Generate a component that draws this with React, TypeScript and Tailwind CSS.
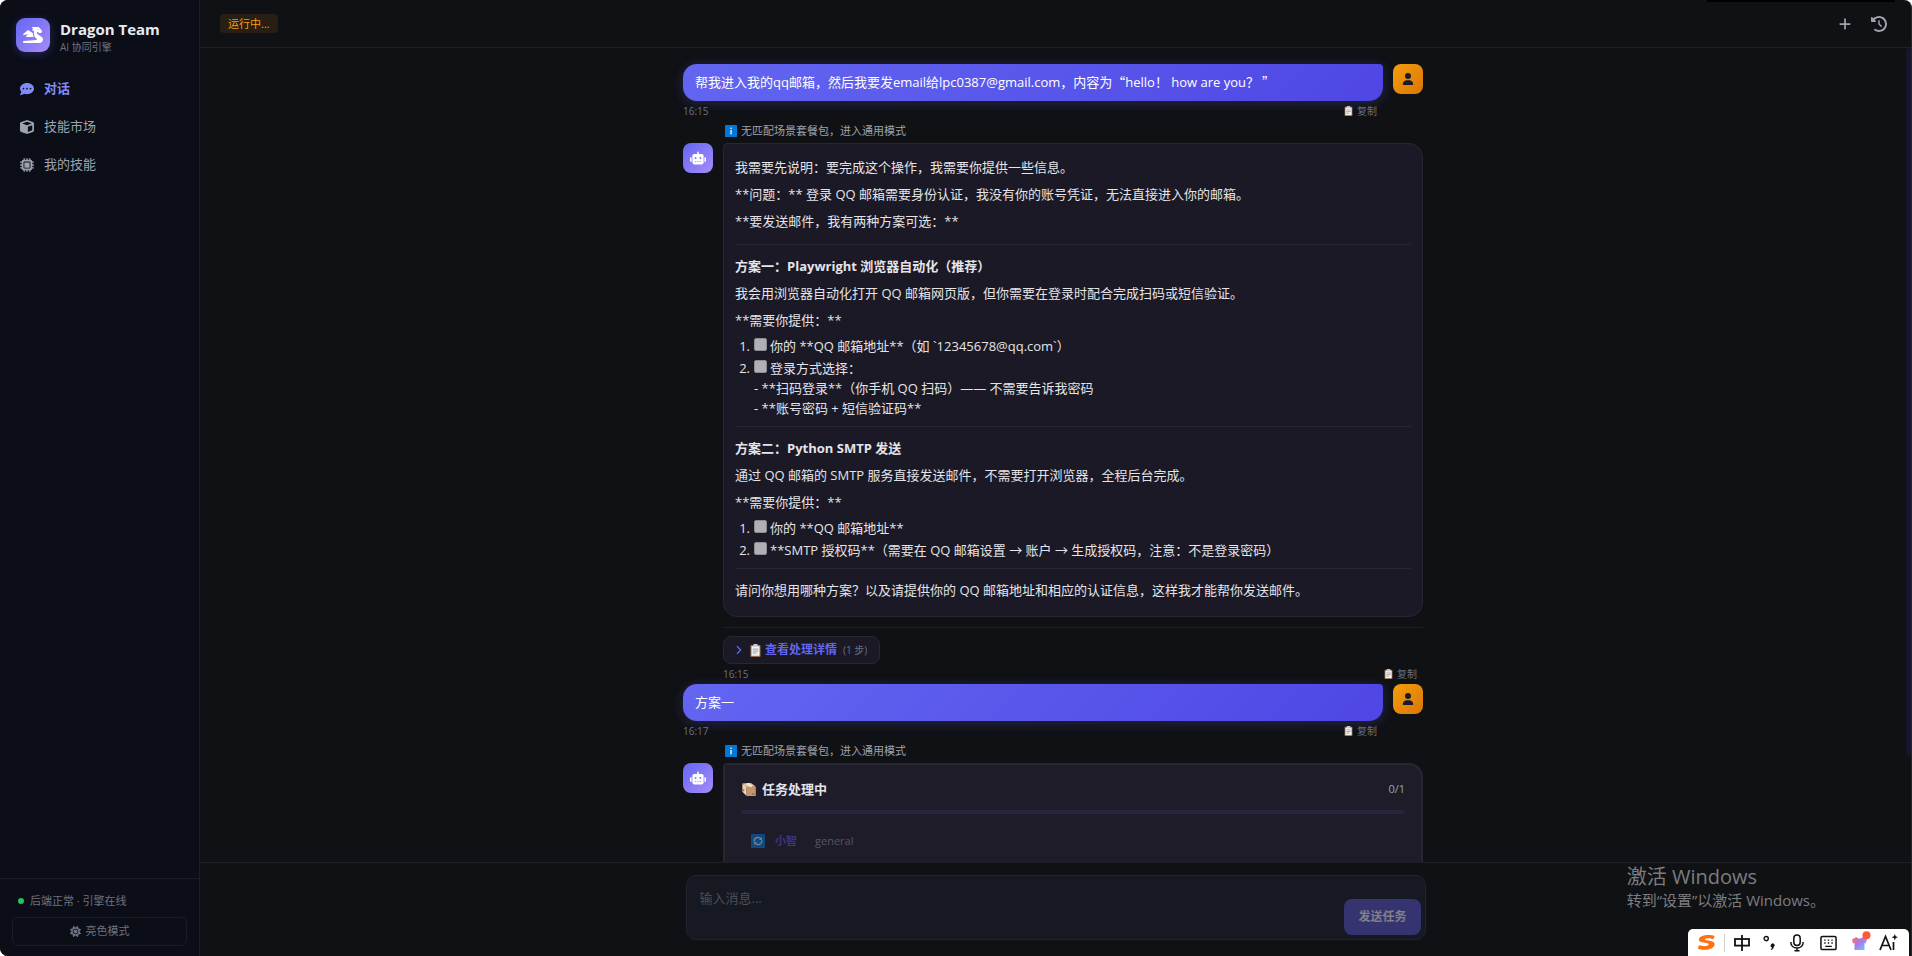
import type { ReactNode } from "react";
import {
  FaCommentDots,
  FaCube,
  FaDragon,
  FaMicrochip,
  FaPlus,
  FaRobot,
  FaSun,
  FaUser,
  FaClockRotateLeft,
} from "react-icons/fa6";
import { FiChevronRight } from "react-icons/fi";

function ClipboardIcon({ className }: { className: string }) {
  return (
    <svg viewBox="0 0 12 14" className={className} aria-hidden="true">
      <rect x="0.5" y="1" width="11" height="13" rx="1" fill="#9a6b4a" />
      <rect x="1.6" y="2.2" width="8.8" height="10.6" fill="#f1f1f1" />
      <rect x="3.6" y="0" width="4.8" height="3" rx="0.8" fill="#c9c9cc" />
      <path d="M3 5.5h6M3 7.7h6M3 9.9h4" stroke="#8d8d92" strokeWidth="0.9" />
    </svg>
  );
}

function InfoIcon() {
  return (
    <svg viewBox="0 0 12 12" className="size-3 shrink-0" aria-hidden="true">
      <rect width="12" height="12" rx="0.6" fill="#0078d7" />
      <rect x="5.4" y="2.6" width="1.3" height="1.4" fill="#fff" />
      <rect x="5.4" y="5" width="1.3" height="4.4" fill="#fff" />
    </svg>
  );
}

function PackageIcon() {
  return (
    <svg viewBox="0 0 16 15" className="h-[15px] w-4 shrink-0" aria-hidden="true">
      <path d="M1.4 1.4 9.8 1 14.8 4.6 5.6 5z" fill="#e8c8a6" />
      <path d="M1.4 1.4 5.6 5V14L1.4 9.8z" fill="#f0d3b3" />
      <path d="M5.6 5 14.8 4.6V14H5.6z" fill="#c3976a" />
      <path d="M5.2 1.2 7.4 1.1l4.2 3.7-2.4.1z" fill="#f7ebdc" />
      <rect x="2" y="7.4" width="1.2" height="1.8" fill="#d13438" />
      <path d="M11 12h2.4" stroke="#7a5a3c" strokeWidth="1" />
    </svg>
  );
}

function SyncIcon() {
  return (
    <svg viewBox="0 0 14 14" className="size-3.5 shrink-0" aria-hidden="true">
      <rect width="14" height="14" rx="0.8" fill="#0078d7" />
      <path d="M3.2 7.6A3.8 3.8 0 0 1 10 4.9M10.8 6.4A3.8 3.8 0 0 1 4 9.1" fill="none" stroke="#cfe6fa" strokeWidth="1.3" />
      <path d="M10.8 3v3H7.9zM3.2 11V8h2.9z" fill="#cfe6fa" />
    </svg>
  );
}

function Meta({ time }: { time: string }) {
  return (
    <div className="flex h-5 items-center justify-between text-[#6b7280]">
      <time className="text-[10px] leading-5">{time}</time>
      <button type="button" className="flex items-center gap-1 px-1.5 text-[10px] leading-5">
        <ClipboardIcon className="h-[10px] w-[9px]" />
        复制
      </button>
    </div>
  );
}

function UserMessage({ children, time }: { children: ReactNode; time: string }) {
  return (
    <div className="flex items-start gap-2.5">
      <div className="min-w-0 flex-1">
        <p className="rounded-[14px] rounded-tr-[4px] bg-linear-135 from-[#6366f1] to-[#4f46e5] px-3 py-2 text-[13px] leading-[21px] text-white shadow-[0_2px_12px_rgba(99,102,241,0.25)]">
          {children}
        </p>
        <Meta time={time} />
      </div>
      <div className="flex size-[30px] items-center justify-center rounded-lg bg-linear-to-br from-[#f59e0b] to-[#d97706] text-[#1a1a28]">
        <FaUser className="size-3" />
      </div>
    </div>
  );
}

function Notice() {
  return (
    <p className="mb-0.5 ml-[42px] flex items-center gap-1 text-[11px] leading-5 text-[#9ca3af]">
      <InfoIcon />
      无匹配场景套餐包，进入通用模式
    </p>
  );
}

function BotRow({ children }: { children: ReactNode }) {
  return (
    <div className="flex items-start gap-2.5">
      <div className="flex size-[30px] shrink-0 items-center justify-center rounded-lg bg-linear-to-br from-[#6366f1] to-[#a78bfa] text-white">
        <FaRobot className="size-4" />
      </div>
      <div className="min-w-0 flex-1">{children}</div>
    </div>
  );
}

function Rule() {
  return <hr className="mt-2 mb-[11px] border-[#272732]" />;
}

function CheckItem({ n, label, children }: { n: number; label: string; children?: ReactNode }) {
  return (
    <li className="flex">
      <span className="w-[19px] shrink-0 pr-1 text-right">{n}.</span>
      <div>
        <label className="flex items-center gap-[3px]">
          <input
            type="checkbox"
            disabled
            className="-mt-[3px] size-[13px] appearance-none rounded-[2px] border border-[#8d8c92] bg-[#b0afb4]"
          />
          {label}
        </label>
        {children}
      </div>
    </li>
  );
}

function Answer() {
  return (
    <div className="rounded-[14px] rounded-tl-[4px] border border-[#272730] bg-[#1a1925] px-[11px] pt-[13px] pb-4 text-[13px] leading-5 text-[#e4e4e9]">
      <div className="space-y-[7px] pb-[5px]">
        <p>我需要先说明：要完成这个操作，我需要你提供一些信息。</p>
        <p>**问题：** 登录 QQ 邮箱需要身份认证，我没有你的账号凭证，无法直接进入你的邮箱。</p>
        <p>**要发送邮件，我有两种方案可选：**</p>
      </div>
      <Rule />
      <div className="space-y-[7px]">
        <h3 className="font-bold">方案一：Playwright 浏览器自动化（推荐）</h3>
        <p>我会用浏览器自动化打开 QQ 邮箱网页版，但你需要在登录时配合完成扫码或短信验证。</p>
        <p>**需要你提供：**</p>
      </div>
      <ol className="mt-1.5 space-y-0.5">
        <CheckItem n={1} label="你的 **QQ 邮箱地址**（如 `12345678@qq.com`）" />
        <CheckItem n={2} label="登录方式选择：">
          <p>- **扫码登录**（你手机 QQ 扫码）—— 不需要告诉我密码</p>
          <p>- **账号密码 + 短信验证码**</p>
        </CheckItem>
      </ol>
      <Rule />
      <div className="space-y-[7px]">
        <h3 className="font-bold">方案二：Python SMTP 发送</h3>
        <p>通过 QQ 邮箱的 SMTP 服务直接发送邮件，不需要打开浏览器，全程后台完成。</p>
        <p>**需要你提供：**</p>
      </div>
      <ol className="mt-1.5 space-y-0.5">
        <CheckItem n={1} label="你的 **QQ 邮箱地址**" />
        <CheckItem n={2} label="**SMTP 授权码**（需要在 QQ 邮箱设置 → 账户 → 生成授权码，注意：不是登录密码）" />
      </ol>
      <Rule />
      <p>请问你想用哪种方案？以及请提供你的 QQ 邮箱地址和相应的认证信息，这样我才能帮你发送邮件。</p>
    </div>
  );
}

function TaskCard() {
  return (
    <div className="h-[170px] rounded-[14px] rounded-tl-[4px] border-2 border-[#272732] bg-[#1e1c29] p-4">
      <div className="flex items-center gap-[5px] text-[#e4e4e9]">
        <PackageIcon />
        <h3 className="text-[13px] leading-4 font-bold">任务处理中</h3>
        <span className="ml-auto text-[11px] leading-4 text-[#9ca3af]">0/1</span>
      </div>
      <div role="progressbar" aria-valuenow={0} aria-valuemax={1} className="mt-[13px] h-1 rounded-sm bg-[#28243f]" />
      <div className="mt-4 flex h-[22px] items-center px-2.5 text-[11px] opacity-50">
        <SyncIcon />
        <span className="ml-2.5 font-bold text-[#5b50d6]">小智</span>
        <span className="ml-[18px] text-[#8b8b98]">general</span>
      </div>
    </div>
  );
}

const navItems = [
  { label: "对话", icon: FaCommentDots, active: true },
  { label: "技能市场", icon: FaCube, active: false },
  { label: "我的技能", icon: FaMicrochip, active: false },
];

function Sidebar() {
  return (
    <aside className="flex w-[200px] shrink-0 flex-col border-r border-[#1e1f26] bg-[#0b0d17]">
      <div className="flex items-start gap-2.5 px-4 pt-[18px]">
        <div className="flex size-[34px] items-center justify-center rounded-[9px] bg-linear-to-br from-[#6366f1] to-[#a78bfa] text-white shadow-[0_2px_10px_rgba(99,102,241,0.3)]">
          <FaDragon className="h-[18px] w-5" />
        </div>
        <div className="pt-0.5">
          <h1 className="text-[15px] leading-[18px] font-bold text-[#e8eaf0]">Dragon Team</h1>
          <p className="text-[10px] leading-[18px] text-[#6b7280]">AI 协同引擎</p>
        </div>
      </div>
      <nav className="mt-3.5 flex flex-col">
        {navItems.map(({ label, icon: Icon, active }) => (
          <a
            key={label}
            href="#"
            className={
              active
                ? "flex h-[38px] items-center gap-2.5 px-5 text-[13px] font-bold text-[#818cf8]"
                : "flex h-[38px] items-center gap-2.5 px-5 text-[13px] text-[#9ca3af]"
            }
          >
            <Icon className="size-3.5" />
            {label}
          </a>
        ))}
      </nav>
      <div className="mt-auto border-t border-[#1a1c26] px-3 pt-3 pb-2.5">
        <p className="flex items-center gap-1.5 px-1.5 text-[11px] leading-5 text-[#6b7280]">
          <span className="size-1.5 rounded-full bg-[#22c55e]" />
          后端正常 · 引擎在线
        </p>
        <button
          type="button"
          className="mt-1.5 flex h-[29px] w-full items-center justify-center gap-[5px] rounded-md border border-[#1a1c26] text-[11px] text-[#6b7280]"
        >
          <FaSun className="size-[11px]" />
          亮色模式
        </button>
      </div>
    </aside>
  );
}

function Composer() {
  return (
    <footer className="border-t border-[#1f2025] px-4 pt-3 pb-4">
      <form className="mx-auto flex max-w-[740px] items-end rounded-[10px] border border-[#21242e] bg-[#161921] pr-1">
        <textarea
          aria-label="输入消息"
          placeholder="输入消息..."
          className="h-[63px] flex-1 resize-none bg-transparent px-[13px] py-3 text-[13px] leading-5 text-[#e4e4e9] outline-none placeholder:text-[#4b4f5b]"
        />
        <button
          type="button"
          className="mb-1 h-9 rounded-lg bg-[#353471] px-3.5 text-[12px] font-bold text-[#808088]"
        >
          发送任务
        </button>
      </form>
    </footer>
  );
}

function InputMethodBar() {
  return (
    <div className="absolute right-0.5 bottom-0 flex h-[27px] w-[221px] items-center rounded-t-[5px] bg-white pr-2 pl-[9px] text-[#111]">
      <svg viewBox="0 0 20 18" className="h-[17px] w-[19px]" aria-hidden="true">
        <path
          d="M18.6 2.2C14 .2 3.200.8 2 5.400 1.200 8.600 6 9 9.600 9.600c2.400.4 3.200 1 2.400 2-1.400 1.600-6.400 1.600-10.200.4L1 15.600c5.200 2 15.600 1.600 17.400-3.800 1-3.400-3.200-4.200-6.800-4.800-2.600-.4-4-.8-3.200-1.600 1.200-1.200 5.600-1 8.800.2z"
          fill="#ff7112"
        />
      </svg>
      <span className="mx-2 h-[18px] w-px bg-[#cfcfcf]" />
      <svg viewBox="0 0 18 18" className="size-[18px]" fill="none" stroke="currentColor" strokeWidth="1.8" aria-hidden="true">
        <rect x="2" y="5" width="14" height="6.6" />
        <path d="M9 1v16" />
      </svg>
      <svg viewBox="0 0 12 16" className="ml-3 h-4 w-3" aria-hidden="true">
        <circle cx="3.2" cy="3.6" r="2.1" fill="none" stroke="currentColor" strokeWidth="1.4" />
        <path d="M8 9.6a1.9 1.9 0 1 1 2.9 2.2c-.3 1.5-1.2 2.6-2.8 3.2l-.4-.7c.8-.5 1.3-1.1 1.4-1.9A1.9 1.9 0 0 1 8 9.6z" fill="currentColor" />
      </svg>
      <svg viewBox="0 0 16 18" className="ml-3.5 h-[18px] w-4" fill="none" stroke="currentColor" strokeWidth="1.5" aria-hidden="true">
        <rect x="4.8" y="1" width="6.4" height="10.5" rx="3.2" />
        <path d="M1.8 8c0 3.8 2.8 6 6.2 6s6.2-2.2 6.2-6M8 14v2.8M5.5 16.8h5" />
      </svg>
      <svg viewBox="0 0 18 16" className="ml-[15px] h-4 w-[17px]" fill="none" stroke="currentColor" aria-hidden="true">
        <rect x="1" y="1" width="16" height="14" rx="1.5" strokeWidth="1.6" />
        <path d="M4.5 5H6M8.2 5h1.5M12 5h1.5M4.5 8H6M8.2 8h1.5M12 8h1.5M5.5 11.5h7" strokeWidth="1.4" />
      </svg>
      <svg viewBox="0 0 20 20" className="mb-1 ml-3.5 size-5" aria-hidden="true">
        <defs>
          <linearGradient id="shirt" x1="0" y1="0" x2="1" y2="1">
            <stop offset="0" stopColor="#ff6a5c" />
            <stop offset="0.5" stopColor="#a77bf0" />
            <stop offset="1" stopColor="#5fd8ff" />
          </linearGradient>
        </defs>
        <path d="M1 8.5 5.5 6c1 2 5 2 6 0L16 8.5 14.5 12.5 13.5 12V19h-10V12L2 12.5z" fill="url(#shirt)" />
        <circle cx="15.5" cy="4.2" r="4" fill="#ff5a36" />
      </svg>
      <svg viewBox="0 0 19 17" className="ml-2 h-[17px] w-[19px]" fill="none" stroke="currentColor" strokeWidth="1.7" aria-hidden="true">
        <path d="M1 16 6.5 2.500 12 16M3 11.500h7M14.500 8v8" />
        <path d="M15.800 0l.9 2.300 2.300.9-2.300.9-.9 2.300-.9-2.300-2.300-.9 2.300-.9z" fill="currentColor" stroke="none" />
      </svg>
    </div>
  );
}

export default function App() {
  return (
    <div className="h-screen bg-white font-['Open_Sans','Noto_Sans_CJK_SC',sans-serif]">
      <div className="relative flex h-full overflow-hidden rounded-lg rounded-br-none border-r border-[#26272b] bg-[#101115]">
        <Sidebar />
        <main className="flex min-w-0 flex-1 flex-col">
          <header className="flex h-12 shrink-0 items-center border-b border-[#1f2025] px-5">
            <span className="rounded bg-[#f59e0b]/10 px-2 text-[11px] leading-[19px] text-[#f59e0b]">运行中...</span>
            <div className="ml-auto flex items-center gap-[19px] pr-1 text-[#9ca3af]">
              <button type="button" aria-label="新建对话">
                <FaPlus className="size-3.5" />
              </button>
              <button type="button" aria-label="历史记录">
                <FaClockRotateLeft className="size-4" />
              </button>
            </div>
          </header>
          <div className="flex min-h-0 flex-1">
            <section className="min-w-0 flex-1 overflow-y-auto px-4 pt-4 [scrollbar-width:none]">
              <div className="mx-auto max-w-[740px]">
                <UserMessage time="16:15">
                  帮我进入我的qq邮箱，然后我要发email给lpc0387@gmail.com，内容为
                  <span className="font-['Noto_Sans_CJK_SC',sans-serif] leading-none">“</span>
                  hello！ how are you？
                  <span className="font-['Noto_Sans_CJK_SC',sans-serif] leading-none"> ”</span>
                </UserMessage>
                <Notice />
                <BotRow>
                  <Answer />
                  <div className="mt-2.5 border-t border-[#1f2026] pt-2">
                    <button
                      type="button"
                      className="flex h-7 items-center rounded-lg border border-[#272732] bg-[#1a1925] px-3 text-[12px] text-[#6366f1]"
                    >
                      <FiChevronRight className="-ml-1 size-3.5" />
                      <ClipboardIcon className="mx-1 h-[13px] w-[11px]" />
                      <span className="font-bold">查看处理详情</span>
                      <span className="ml-1.5 text-[10px] text-[#6b7280]">(1 步)</span>
                    </button>
                  </div>
                  <Meta time="16:15" />
                </BotRow>
                <UserMessage time="16:17">方案一</UserMessage>
                <Notice />
                <BotRow>
                  <TaskCard />
                </BotRow>
              </div>
            </section>
            <div className="w-[5px] shrink-0">
              <div className="h-[87%] rounded-full bg-[#15172b]" />
            </div>
          </div>
          <Composer />
        </main>
        <div className="absolute top-0 right-4 h-0.5 w-[188px] bg-black" />
        <div className="absolute right-[86px] bottom-[46px] text-[#7d7d7f]">
          <p className="text-[20px] leading-[26px]">激活 Windows</p>
          <p className="text-[15px] leading-5">转到“设置”以激活 Windows。</p>
        </div>
        <InputMethodBar />
      </div>
    </div>
  );
}
